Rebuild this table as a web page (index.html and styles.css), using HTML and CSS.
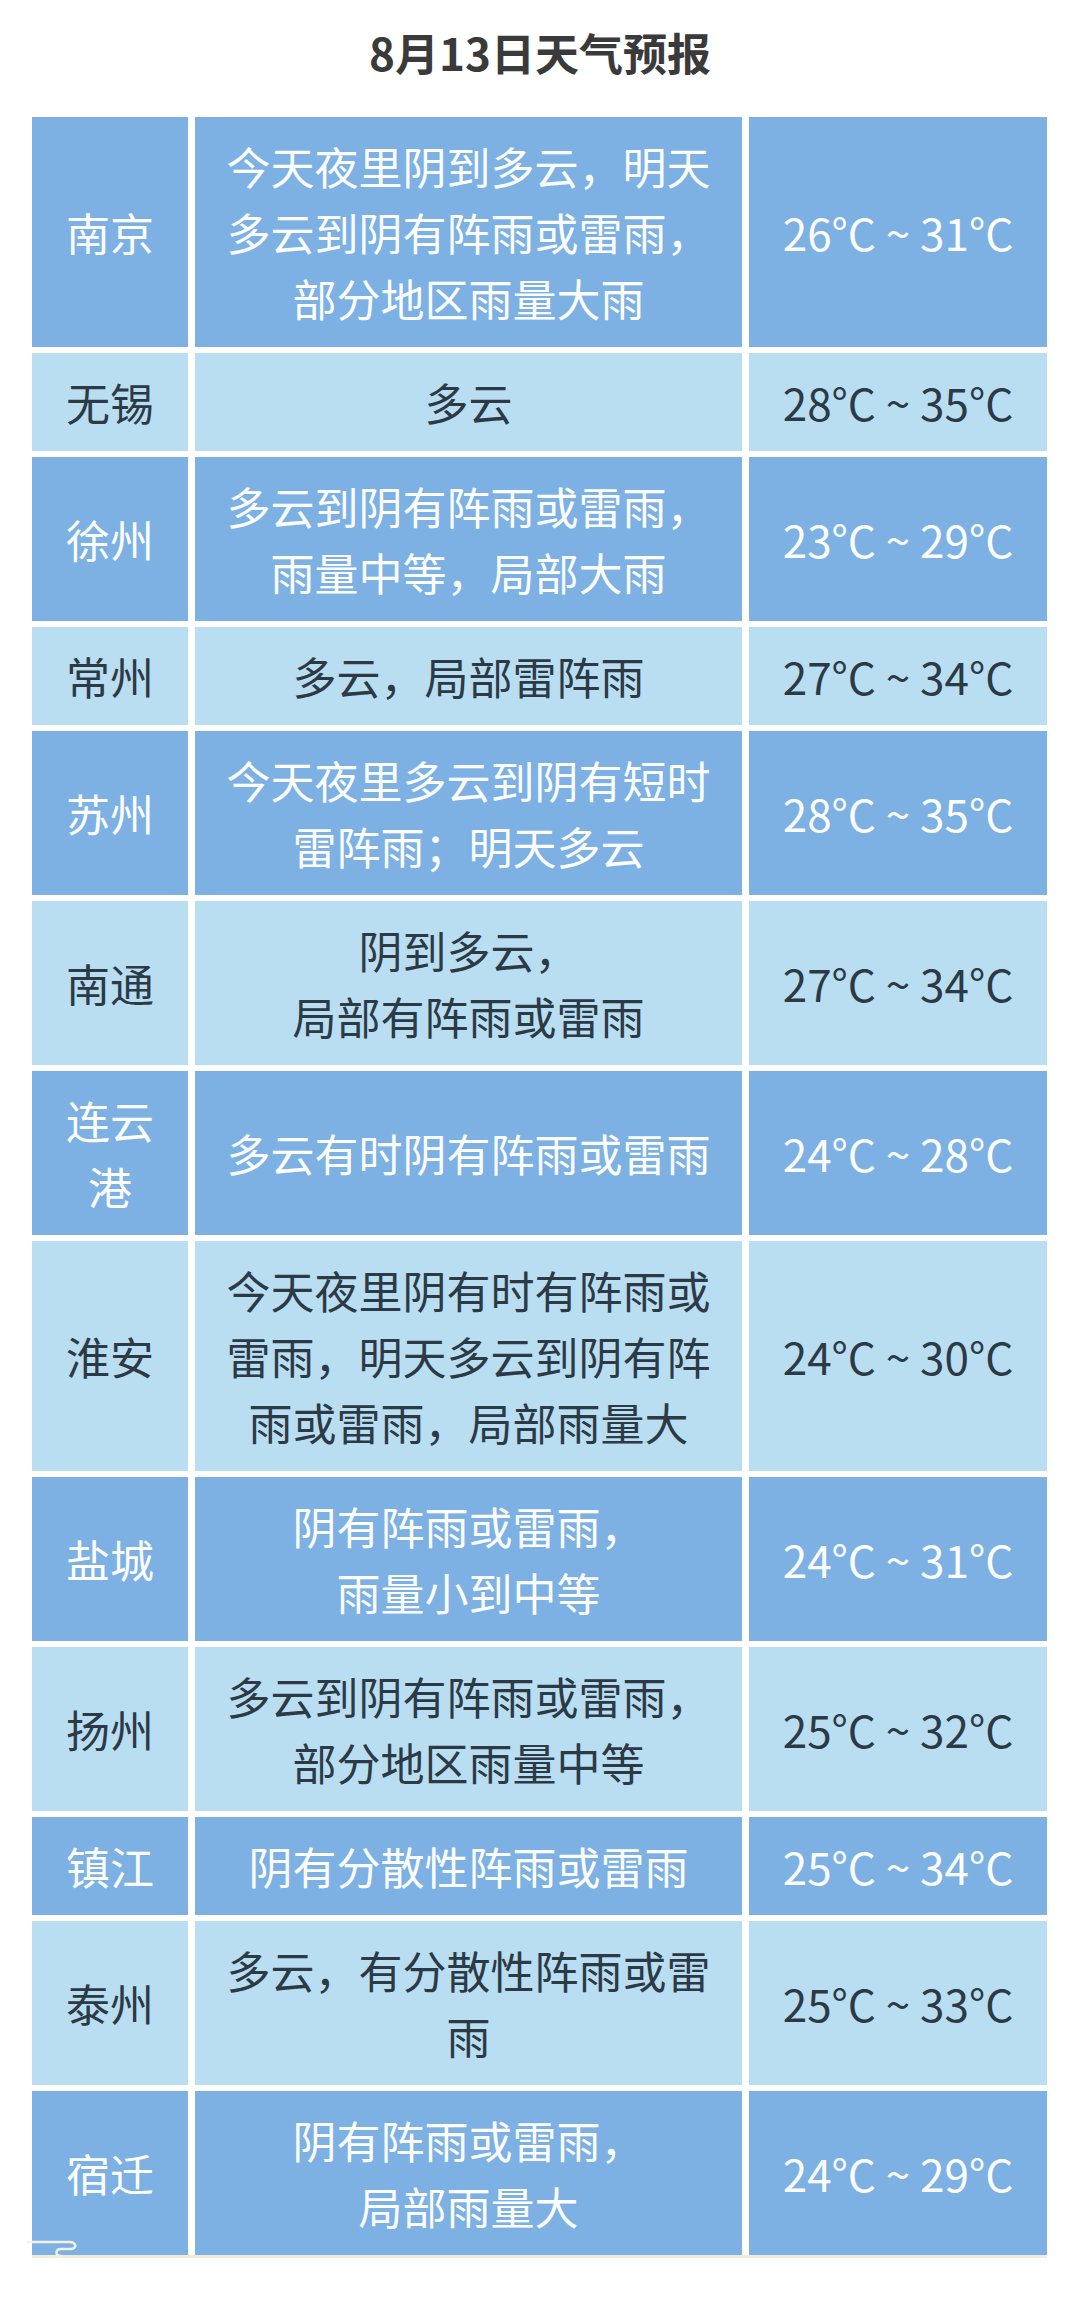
FILE: index.html
```html
<!DOCTYPE html>
<html lang="zh-CN">
<head>
<meta charset="utf-8">
<title>8月13日天气预报</title>
<link rel="stylesheet" href="styles.css">
</head>
<body>
<div class="page">
  <h1 class="title">8月13日天气预报</h1>
  <div class="table">
    <div class="row dark"><div class="cell city">南京</div><div class="cell desc">今天夜里阴到多云，明天多云到阴有阵雨或雷雨，部分地区雨量大雨</div><div class="cell temp">26°C ~ 31°C</div></div>
    <div class="row light"><div class="cell city">无锡</div><div class="cell desc">多云</div><div class="cell temp">28°C ~ 35°C</div></div>
    <div class="row dark"><div class="cell city">徐州</div><div class="cell desc">多云到阴有阵雨或雷雨，雨量中等，局部大雨</div><div class="cell temp">23°C ~ 29°C</div></div>
    <div class="row light"><div class="cell city">常州</div><div class="cell desc">多云，局部雷阵雨</div><div class="cell temp">27°C ~ 34°C</div></div>
    <div class="row dark"><div class="cell city">苏州</div><div class="cell desc">今天夜里多云到阴有短时雷阵雨；明天多云</div><div class="cell temp">28°C ~ 35°C</div></div>
    <div class="row light"><div class="cell city">南通</div><div class="cell desc">阴到多云，<br>局部有阵雨或雷雨</div><div class="cell temp">27°C ~ 34°C</div></div>
    <div class="row dark"><div class="cell city">连云港</div><div class="cell desc">多云有时阴有阵雨或雷雨</div><div class="cell temp">24°C ~ 28°C</div></div>
    <div class="row light"><div class="cell city">淮安</div><div class="cell desc">今天夜里阴有时有阵雨或雷雨，明天多云到阴有阵雨或雷雨，局部雨量大</div><div class="cell temp">24°C ~ 30°C</div></div>
    <div class="row dark"><div class="cell city">盐城</div><div class="cell desc">阴有阵雨或雷雨，<br>雨量小到中等</div><div class="cell temp">24°C ~ 31°C</div></div>
    <div class="row light"><div class="cell city">扬州</div><div class="cell desc">多云到阴有阵雨或雷雨，部分地区雨量中等</div><div class="cell temp">25°C ~ 32°C</div></div>
    <div class="row dark"><div class="cell city">镇江</div><div class="cell desc">阴有分散性阵雨或雷雨</div><div class="cell temp">25°C ~ 34°C</div></div>
    <div class="row light"><div class="cell city">泰州</div><div class="cell desc">多云，有分散性阵雨或雷雨</div><div class="cell temp">25°C ~ 33°C</div></div>
    <div class="row dark"><div class="cell city">宿迁</div><div class="cell desc">阴有阵雨或雷雨，<br>局部雨量大</div><div class="cell temp">24°C ~ 29°C</div></div>
    <svg class="curl" width="70" height="24" viewBox="0 0 70 24" aria-hidden="true">
      <path d="M0 5 H42 C50 5 50 12 44 12 H34 C28 12 28 19 34 19" fill="none" stroke="#f4f1e8" stroke-width="2.5"/>
    </svg>
  </div>
</div>
</body>
</html>
```

FILE: styles.css
```css
html, body {
  margin: 0;
  padding: 0;
  background: #ffffff;
}

body {
  font-family: "Noto Sans CJK SC", "Noto Sans", sans-serif;
}

.page {
  width: 1080px;
  padding-top: 22px;
}

.title {
  margin: 0 0 35px 0;
  height: 60px;
  line-height: 60px;
  font-size: 44px;
  font-weight: 700;
  color: #3a3a3a;
  text-align: center;
}

.table {
  position: relative;
  margin-left: 32px;
  width: 1015px;
  display: flex;
  flex-direction: column;
  gap: 6.5px;
  border-bottom: 3px solid #f3ead8;
  padding-bottom: 0;
}

.row {
  display: grid;
  grid-template-columns: 156px 547px 298px;
  column-gap: 7px;
}

.cell {
  display: flex;
  align-items: center;
  justify-content: center;
  text-align: center;
  font-size: 44px;
  line-height: 66px;
  padding: 15.75px 0;
}

.city {
  padding-left: 22px;
  padding-right: 22px;
}

.desc {
  padding-left: 20px;
  padding-right: 20px;
}

.temp {
  padding-left: 4px;
  padding-right: 4px;
}

.dark .cell {
  background: #7db1e3;
  color: #fbfdff;
}

.light .cell {
  background: #b9ddf1;
  color: #2c3a46;
}

.curl {
  position: absolute;
  left: -5px;
  bottom: -6px;
}
```
